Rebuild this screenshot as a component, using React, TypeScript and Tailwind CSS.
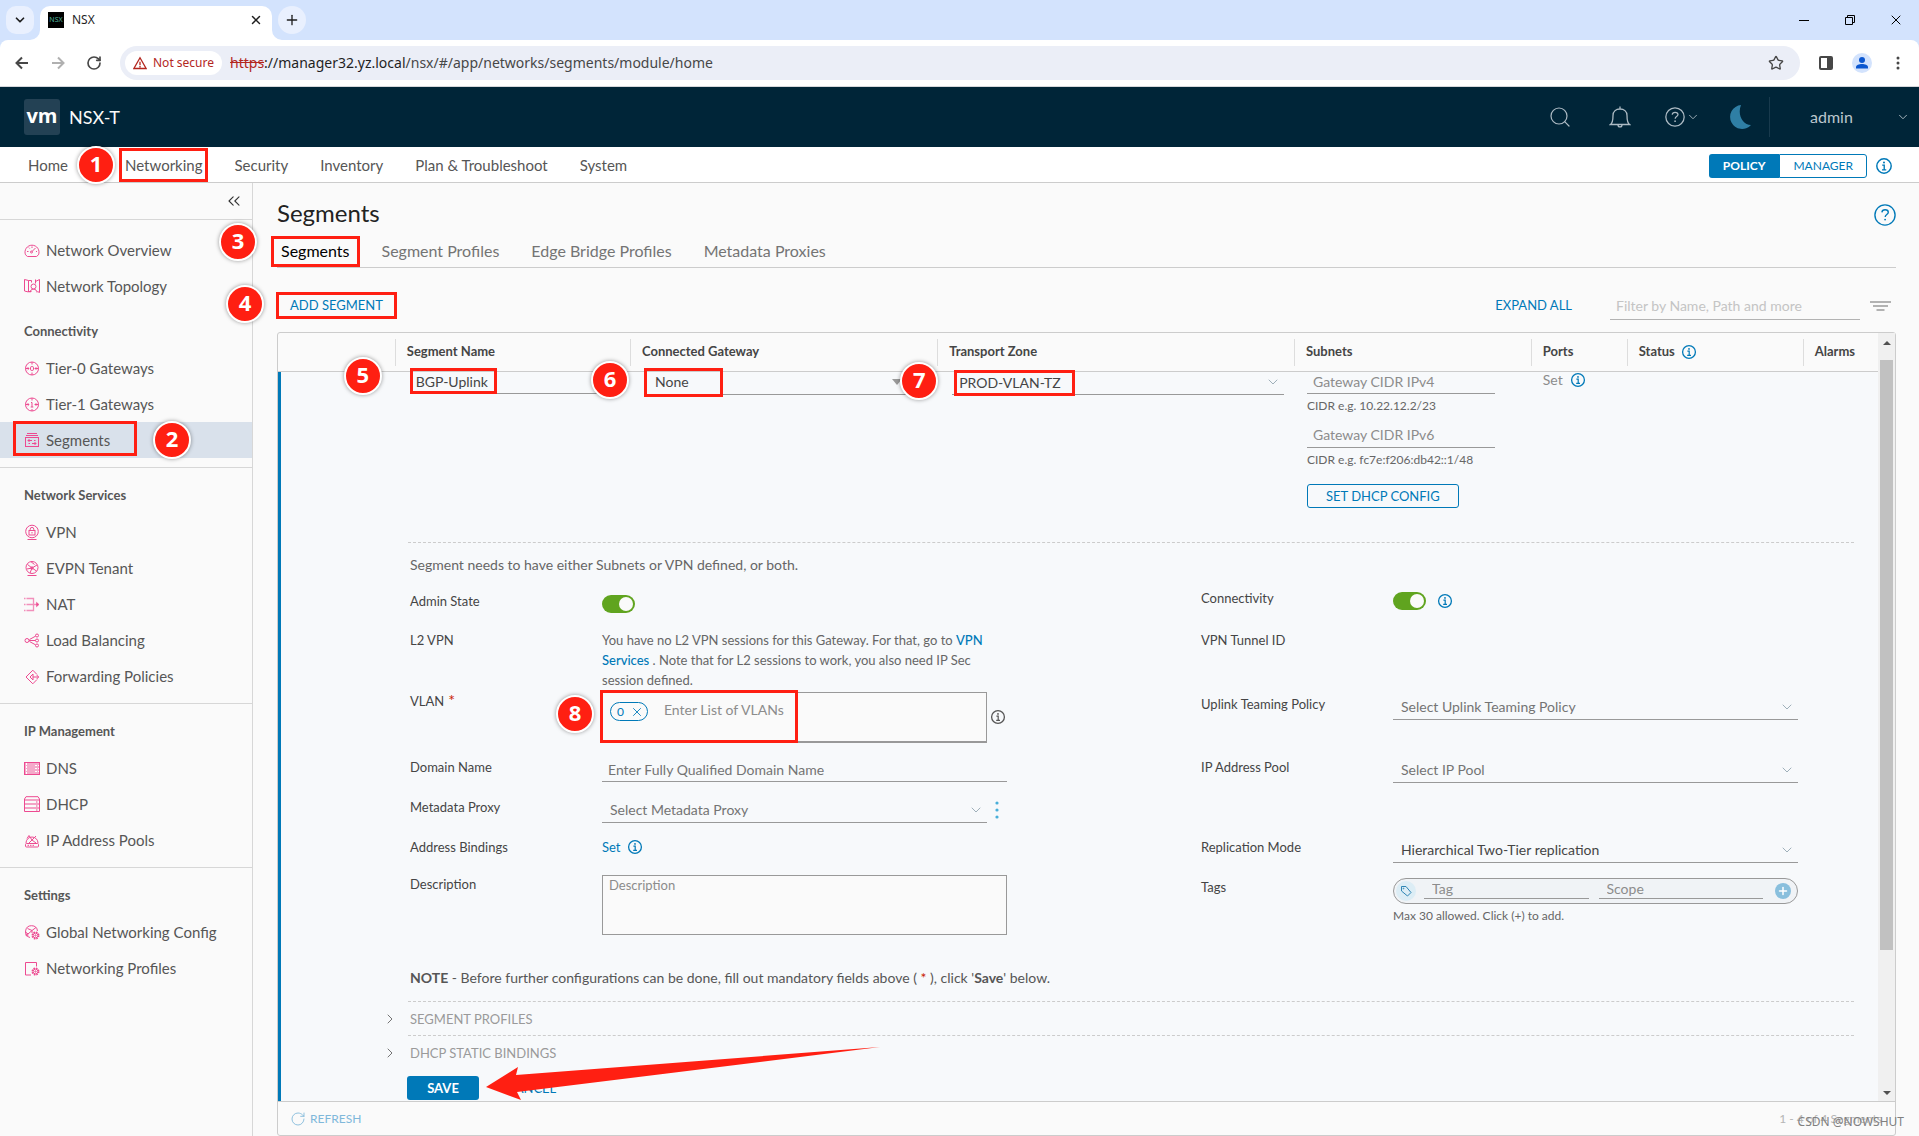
import type { ReactNode } from "react"
import { ChevronDown, ChevronRight, ChevronsLeft, Plus, RotateCw, Search, Star, X } from "lucide-react"

type SideItem = { label: string; icon: ReactNode; active?: boolean }

/* ---------- icons ---------- */

function InfoIcon({ className = "text-[#0079b8]" }: { className?: string }) {
  return (
    <svg viewBox="0 0 16 16" className={`size-4 shrink-0 ${className}`} fill="none" stroke="currentColor">
      <circle cx="8" cy="8" r="6.4" strokeWidth="1.3" />
      <path d="M6.4 7.2H8.2V11.4M6.2 11.4H10" strokeWidth="1.2" />
      <circle cx="8" cy="4.9" r="0.9" fill="currentColor" stroke="none" />
    </svg>
  )
}

function HelpIcon({ className }: { className: string }) {
  return (
    <svg viewBox="0 0 24 24" className={className} fill="none" stroke="currentColor" strokeWidth="1.5">
      <circle cx="12" cy="12" r="11" />
      <path d="M8.6 9.2c.2-1.8 1.5-2.9 3.5-2.9s3.5 1.1 3.5 2.8c0 2.4-3.4 2.4-3.4 5" />
      <circle cx="12.1" cy="17" r="1" fill="currentColor" stroke="none" />
    </svg>
  )
}

function SideIcon({ children }: { children: ReactNode }) {
  return (
    <svg viewBox="0 0 16 16" className="size-4 shrink-0 text-[#ed4a91]" fill="none" stroke="currentColor" strokeWidth="1">
      {children}
    </svg>
  )
}

const gear = (
  <>
    <circle cx="11.5" cy="11.5" r="3.3" strokeDasharray="1.6 1" strokeWidth="1.4" />
    <circle cx="11.5" cy="11.5" r="2.4" />
    <circle cx="11.5" cy="11.5" r="0.7" />
  </>
)

const overviewItems: SideItem[] = [
  {
    label: "Network Overview",
    icon: <SideIcon><path d="M3.500 14.500H12.500L14.500 12.800A7 7 0 1 0 1.500 12.800Z" /><path d="M3 9.500h1.500M4.800 5.600l.9.9M8 4.500V6M13 9.500h-1" /><path d="M11.500 6 8 9.500" /><circle cx="7.5" cy="10" r="1" /></SideIcon>,
  },
  {
    label: "Network Topology",
    icon: <SideIcon><path d="M.5 1.500V13l4 1V2.500zM4.500 2.500h3v2M4.500 13.500h3M11.500 3.500l4-2V14.500l-2-1M11.500 1.500v4" /><circle cx="9.500" cy="8.500" r="2.500" /><path d="M6 14.500c0-2 1.500-3.300 3.500-3.300s3.500 1.300 3.500 3.300" /></SideIcon>,
  },
]

const sections: { title: string; items: SideItem[] }[] = [
  {
    title: "Connectivity",
    items: [
      {
        label: "Tier-0 Gateways",
        icon: <SideIcon><circle cx="8" cy="8.500" r="6.500" /><rect x="6.500" y="6.500" width="3" height="4" rx="1.300" /><path d="M8 2v2.500M8 12.500V15M1.500 8.500H5M11 8.500h3.500M3.700 7.200 5 8.500 3.700 9.800M12.300 7.200 11 8.500l1.300 1.300" /></SideIcon>,
      },
      {
        label: "Tier-1 Gateways",
        icon: <SideIcon><circle cx="8" cy="8.500" r="6.500" /><path d="M7 6.500h1v4.500M6.700 11h2.600M8 2v2.500M8 13V15M1.500 8.500H5M11 8.500h3.500M3.700 7.200 5 8.500 3.700 9.800M12.300 7.200 11 8.500l1.300 1.300" /></SideIcon>,
      },
      {
        label: "Segments",
        active: true,
        icon: <SideIcon><path d="M3 1.500h10M2 3.500h12" /><rect x="1.500" y="5.500" width="13" height="9" /><path d="M4 8.500h4M10 8.500h1.500M5.500 7 4 8.500 5.500 10M12 11.500H8M6 11.500H4.500M10.500 10l1.500 1.500-1.500 1.500" /></SideIcon>,
      },
    ],
  },
  {
    title: "Network Services",
    items: [
      {
        label: "VPN",
        icon: <SideIcon><circle cx="8" cy="7.500" r="6.300" /><rect x="5" y="6.500" width="6" height="4.500" /><path d="M6.200 6.500V5.200a1.800 1.800 0 0 1 3.600 0v1.300M8 8v1.500M3.500 15.500h9" /></SideIcon>,
      },
      {
        label: "EVPN Tenant",
        icon: <SideIcon><circle cx="8" cy="7.500" r="6" /><path d="M3.500 4.500 8 8l5-3M8 8l-2 5M3 9l5-1 4.500 3M7 1.700 10.500 4.500M3.500 15.500h9" /><circle cx="8" cy="8" r="1.200" /></SideIcon>,
      },
      {
        label: "NAT",
        icon: <SideIcon><g opacity="0.6"><path d="M2.500 2.500H9.500V14.500H2.500M0 2.500h1.500M0 14.500h1.500M0 8.500h1.500M2.500 8.500H14" strokeWidth="1.300" /></g><path d="M12.500 6.200 15 8.500l-2.500 2.300z" fill="currentColor" strokeWidth="0.500" /></SideIcon>,
      },
      {
        label: "Load Balancing",
        icon: <SideIcon><circle cx="3" cy="8.500" r="2" /><circle cx="13" cy="3.500" r="1.500" /><circle cx="13" cy="8.500" r="1.500" /><circle cx="13" cy="13.500" r="1.500" /><path d="M5 8.500h6.500M5.500 7.500 11.500 4.200M5.500 9.500l6 3.300" /></SideIcon>,
      },
      {
        label: "Forwarding Policies",
        icon: <SideIcon><path d="M13 6.500 8.800 2.200 2 9l6.800 6.800L13 11.500" /><path d="M6 9l3-3v6z M9 9h5.500M12.700 7 14.700 9l-2 2" /></SideIcon>,
      },
    ],
  },
  {
    title: "IP Management",
    items: [
      {
        label: "DNS",
        icon: <SideIcon><rect x=".5" y="2" width="15" height="13" fill="currentColor" fillOpacity="0.450" stroke="none" /><path d="M.5 2v13M15.500 2v13M0 2.500h16M0 14.500h16" /><path d="M2.500 3v11M11 5.500h4M11 8.500h4M11 11.500h4" stroke="#fff" strokeDasharray="2 1" /></SideIcon>,
      },
      {
        label: "DHCP",
        icon: <SideIcon><path d="M.5 15.500V3L2 .7h12L15.500 3V15.500zM.5 4h15M.5 8h15M.5 12h15M12 6h1.500M12 10h1.500M12 14h1.500" /></SideIcon>,
      },
      {
        label: "IP Address Pools",
        icon: <SideIcon><path d="M2 11a6 6 0 1 1 12 0M5 3.500 8 8l4-4M8 8l-3 3M8 8l4 3M3 6.500 5 3.500" /><rect x="1.500" y="11.500" width="13" height="3.500" rx="1" /><path d="M3.500 13.300h7" strokeDasharray="1.500 1" /></SideIcon>,
      },
    ],
  },
  {
    title: "Settings",
    items: [
      {
        label: "Global Networking Config",
        icon: <SideIcon><path d="M6 13.500A6 6 0 1 1 13.500 7M3.500 4.500 8 6.500l4-3M8 6.500 4 10M8 6.500V9M1.500 8 4 10" /><circle cx="3" cy="11" r="1" />{gear}</SideIcon>,
      },
      {
        label: "Networking Profiles",
        icon: <SideIcon><path d="M12.500 6.500V2.500H1.500V15H7" />{gear}</SideIcon>,
      },
    ],
  },
]

/* ---------- annotation marks ---------- */

function Badge({ n, className }: { n: number; className: string }) {
  return (
    <span
      className={`absolute z-20 flex size-[38px] items-center justify-center rounded-full border-2 border-white bg-[#ff1f12] pb-1 font-['Open_Sans',sans-serif] text-[22px] leading-none font-bold text-white shadow-[0_0_4px_rgba(0,0,0,0.4)] ${className}`}
    >
      {n}
    </span>
  )
}

function Frame({ className }: { className: string }) {
  return <span className={`pointer-events-none absolute z-10 border-3 border-[#ff1f12] ${className}`} />
}

/* ---------- browser chrome ---------- */

function BrowserBar() {
  return (
    <header className="bg-[#d3e3fd] font-['Noto_Sans',sans-serif] text-[#1f1f1f]">
      <div className="flex h-10 items-end justify-between">
        <div className="flex h-full items-center pl-[6px]">
          <button aria-label="Search tabs" className="flex size-7 items-center justify-center rounded-[10px] bg-[#e9f0fe]">
            <ChevronDown className="size-3.5" strokeWidth={3} />
          </button>
          <div className="relative ml-[6px] flex h-[34px] w-[232px] items-center self-end rounded-t-[10px] bg-white pb-[6px] pl-2 text-xs">
            <svg viewBox="0 0 10 10" className="absolute bottom-0 -left-[10px] size-[10px] fill-white"><path d="M10 0v10H0A10 10 0 0 0 10 0" /></svg>
            <svg viewBox="0 0 10 10" className="absolute -right-[10px] bottom-0 size-[10px] fill-white"><path d="M0 0v10h10A10 10 0 0 1 0 0" /></svg>
            <span className="mr-2 flex size-4 items-center justify-center bg-black text-[7px] text-[#4fb39b]">NSX</span>
            <span>NSX</span>
            <button aria-label="Close tab" className="mr-[9px] ml-auto"><X className="size-3.5" strokeWidth={2.5} /></button>
          </div>
          <button aria-label="New tab" className="ml-[6px] flex size-7 items-center justify-center rounded-full bg-[#e9f0fe]">
            <Plus className="size-4" />
          </button>
        </div>
        <div className="flex h-full">
          <button aria-label="Minimize" className="flex w-[46px] items-center justify-center"><span className="w-[10px] border-t border-black" /></button>
          <button aria-label="Restore" className="flex w-[46px] items-center justify-center">
            <svg viewBox="0 0 10 10" className="size-[10px]" fill="none" stroke="#000"><path d="M.5 2.500h7v7h-7zM2.500 2V.5h7v7H8" /></svg>
          </button>
          <button aria-label="Close" className="flex w-[46px] items-center justify-center"><X className="size-4" strokeWidth={1.5} color="#000" /></button>
        </div>
      </div>
      <div className="flex h-[47px] items-center rounded-t-lg border-b border-[#d5d7db] bg-white pr-[3px] pl-1">
        <button aria-label="Back" className="flex w-9 justify-center">
          <svg viewBox="0 0 16 16" className="size-4" fill="none" stroke="#474747" strokeWidth="2"><path d="M14 8H3M8 2.500 2.500 8 8 13.500" /></svg>
        </button>
        <button aria-label="Forward" className="flex w-9 justify-center">
          <svg viewBox="0 0 16 16" className="size-4" fill="none" stroke="#b0b0b0" strokeWidth="2"><path d="M2 8h11M8 2.500 13.500 8 8 13.500" /></svg>
        </button>
        <button aria-label="Reload" className="flex w-9 justify-center"><RotateCw className="size-4" color="#474747" strokeWidth={2.5} /></button>
        <div className="mx-2 flex h-[34px] flex-1 items-center rounded-full bg-[#ebeef7] pr-4 pl-[5px] text-sm">
          <button className="mr-2 flex h-6 items-center gap-1.5 rounded-full bg-white px-2 text-xs text-[#b3261e]">
            <svg viewBox="0 0 16 16" className="size-3.5" fill="none" stroke="currentColor" strokeWidth="1.5"><path d="M8 2 15 14.300H1zM8 6.500v4M8 11.500V13" /></svg>
            Not secure
          </button>
          <span className="text-[#b3261e] line-through">https</span>
          <span className="text-[#1f1f1f]">://manager32.yz.local</span>
          <span className="text-[#474747]">/nsx/#/app/networks/segments/module/home</span>
          <button aria-label="Bookmark" className="ml-auto"><Star className="size-4" color="#474747" /></button>
        </div>
        <button aria-label="Side panel" className="flex w-9 justify-center">
          <svg viewBox="0 0 14 14" className="size-3.5"><rect x="1" y="1" width="12" height="12" rx="1" fill="none" stroke="#474747" strokeWidth="2" /><path d="M8 1h5v12H8z" fill="#474747" /></svg>
        </button>
        <button aria-label="Profile" className="flex w-9 justify-center">
          <svg viewBox="0 0 20 20" className="size-5"><circle cx="10" cy="10" r="10" fill="#d3e3fd" /><circle cx="10" cy="7" r="3" fill="#0b57d0" /><path d="M4 15.500v-1.500c0-1.700 3-3 6-3s6 1.300 6 3v1.500z" fill="#0b57d0" /></svg>
        </button>
        <button aria-label="Menu" className="flex w-9 justify-center">
          <svg viewBox="0 0 4 16" className="h-4 w-1" fill="#474747"><circle cx="2" cy="3" r="1.5" /><circle cx="2" cy="8" r="1.5" /><circle cx="2" cy="13" r="1.5" /></svg>
        </button>
      </div>
    </header>
  )
}

/* ---------- application header ---------- */

function AppHeader() {
  return (
    <div className="flex h-[60px] items-center bg-[#002538] pl-6 text-[#adbbc4]">
      <span className="flex size-9 items-center justify-center rounded-[3px] bg-[#234154] pb-[2px] font-['Open_Sans',sans-serif] text-xl leading-none font-bold text-white">vm</span>
      <span className="ml-[9px] text-lg text-[#fafafa]">NSX-T</span>
      <div className="ml-auto flex h-10 items-stretch">
        <button aria-label="Search" className="flex w-[60px] items-center justify-center"><Search className="size-6" strokeWidth={1.2} /></button>
        <button aria-label="Notifications" className="flex w-[60px] items-center justify-center">
          <svg viewBox="0 0 22 22" className="size-[22px]" fill="none" stroke="currentColor" strokeWidth="1.3"><path d="M1.500 18.500h19c-2-1.500-2.500-3-2.500-9 0-4-3-6.500-7-6.500S4 5.500 4 9.500c0 6-.5 7.500-2.500 9zM11 .5V3M9 18.700c0 3 4 3 4 0" /></svg>
        </button>
        <button aria-label="Help" className="flex w-[60px] items-center justify-center gap-px pl-1"><HelpIcon className="size-5" /><ChevronDown className="size-3.5" strokeWidth={1.5} /></button>
        <button aria-label="Dark mode" className="flex w-[59px] items-center justify-center">
          <svg viewBox="0 0 22 24" className="h-6 w-[22px] fill-[#2f7fa5]"><path d="M12 0A12 12 0 1 0 22 20C14 20 8 10 12 0" /></svg>
        </button>
        <button className="flex w-[150px] items-center justify-between border-l border-[#183a4d] pr-[9px] pl-10 text-base text-[#bcc7ce]">
          admin <ChevronDown className="size-3.5" strokeWidth={1.5} />
        </button>
      </div>
    </div>
  )
}

function TopNav() {
  return (
    <nav className="flex h-[36px] items-center gap-8 border-b border-[#ccc] bg-white pt-[2px] pr-[26px] pl-7 text-[15px] text-[#565656]">
      <a href="#home">Home</a>
      <a href="#networking" className="relative ml-[25px]">
        Networking
        <Badge n={1} className="-top-2 -left-[48px]" />
        <Frame className="-inset-x-[6px] -top-[6px] h-[34px]" />
      </a>
      <a href="#security">Security</a>
      <a href="#inventory">Inventory</a>
      <a href="#plan">Plan &amp; Troubleshoot</a>
      <a href="#system">System</a>
      <div className="ml-auto flex items-center text-xs">
        <button className="h-6 rounded-l-[3px] bg-[#0079b8] px-[14px] font-bold text-white">POLICY</button>
        <button className="h-6 rounded-r-[3px] border border-[#0079b8] px-[13px] text-[#0079b8]">MANAGER</button>
        <InfoIcon className="ml-2 size-[18px] text-[#0079b8]" />
      </div>
    </nav>
  )
}

function SideLink({ item }: { item: SideItem }) {
  return (
    <a
      href={`#${item.label}`}
      className={`relative flex h-9 items-center gap-[6px] pl-6 text-[15px] text-[#565656] ${item.active ? "bg-[#d9e1eb]" : ""}`}
    >
      {item.icon}
      {item.label}
      {item.active && (
        <>
          <Frame className="-top-px left-[13px] h-[35px] w-[124px]" />
          <Badge n={2} className="-top-px left-[153px]" />
        </>
      )}
    </a>
  )
}

function Sidebar() {
  return (
    <aside className="w-[253px] shrink-0 border-r border-[#d7d7d7] bg-[#fafafa]">
      <div className="flex h-[37px] items-center justify-end border-b border-[#d7d7d7] pr-2">
        <button aria-label="Collapse menu"><ChevronsLeft className="size-5 text-[#333]" strokeWidth={1.3} /></button>
      </div>
      <div className="pt-3">
        {overviewItems.map((item) => (
          <SideLink key={item.label} item={item} />
        ))}
      </div>
      {sections.map((section, i) => (
        <div key={section.title} className={i > 0 ? "mt-[9px] border-t border-[#d7d7d7] pt-[10px]" : "pt-[10px]"}>
          <h3 className="flex h-9 items-center pl-6 text-[13px] font-bold text-[#565656]">{section.title}</h3>
          {section.items.map((item) => (
            <SideLink key={item.label} item={item} />
          ))}
        </div>
      ))}
    </aside>
  )
}

/* ---------- form pieces ---------- */

function Picker({ id, value, className = "text-[#747474]" }: { id: string; value: string; className?: string }) {
  return (
    <div className="relative">
      <select id={id} className={`h-[26px] w-full appearance-none border-b border-[#999] bg-transparent px-2 text-sm ${className}`}>
        <option>{value}</option>
      </select>
      <ChevronDown className="pointer-events-none absolute top-[5px] right-[3px] size-4 text-[#9fb0ba]" strokeWidth={1.5} />
    </div>
  )
}

function Toggle({ id }: { id: string }) {
  return (
    <input
      id={id}
      type="checkbox"
      role="switch"
      defaultChecked
      className="relative mt-1 block h-[18px] w-[33px] appearance-none rounded-full bg-[#999] before:absolute before:top-[2px] before:left-[2px] before:size-[14px] before:rounded-full before:bg-[#fafafa] checked:bg-[#60a41f] checked:before:left-[17px]"
    />
  )
}

function Row({ label, htmlFor, required, className, children }: { label: string; htmlFor?: string; required?: boolean; className: string; children?: ReactNode }) {
  return (
    <div className={`grid grid-cols-[192px_minmax(0,1fr)] items-start ${className}`}>
      <label htmlFor={htmlFor} className="text-[13px] leading-5 text-[#454545]">
        {label}
        {required && <span className="ml-1 text-base leading-none text-[#c92100]">*</span>}
      </label>
      <div>{children}</div>
    </div>
  )
}

function SegmentForm() {
  return (
    <div className="mt-[13px] grid grid-cols-2 gap-x-[194px] pr-14">
      <div className="pt-[3px]">
        <Row label="Admin State" htmlFor="admin-state" className="h-[39px]">
          <Toggle id="admin-state" />
        </Row>
        <Row label="L2 VPN" className="h-[61px]">
          <p className="mr-5 text-[13px] leading-5 text-[#666]">
            You have no L2 VPN sessions for this Gateway. For that, go to{" "}
            <a href="#vpn" className="font-medium text-[#0079b8]">VPN Services</a> . Note that for L2 sessions to work, you also need IP Sec session defined.
          </p>
        </Row>
        <Row label="VLAN" htmlFor="vlan" required className="h-[66px]">
          <div className="relative flex items-center">
            <div className="mt-px flex h-[51px] flex-1 items-start border border-b-2 border-[#999] bg-[#fafafa] px-[7px] pt-[9px]">
              <span className="flex h-[19px] items-center gap-[6px] rounded-full border border-[#0079b8] pr-[3px] pl-[6px] text-xs text-[#0079b8]">
                0
                <button aria-label="Remove VLAN 0"><X className="size-3.5" strokeWidth={1.5} /></button>
              </span>
              <input id="vlan" placeholder="Enter List of VLANs" className="ml-4 h-4 min-w-0 flex-1 text-sm placeholder:text-[#8c8c8c]" />
            </div>
            <InfoIcon className="ml-[3px] text-[#565656]" />
            <span className="w-px" />
            <Frame className="-top-px -left-[2px] h-[53px] w-[198px]" />
            <Badge n={8} className="top-1 -left-[46px]" />
          </div>
        </Row>
        <Row label="Domain Name" htmlFor="domain" className="h-10">
          <input id="domain" placeholder="Enter Fully Qualified Domain Name" className="h-[25px] w-full border-b border-[#999] px-[6px] text-sm placeholder:text-[#747474]" />
        </Row>
        <Row label="Metadata Proxy" htmlFor="proxy" className="h-10">
          <div className="flex items-center">
            <div className="flex-1"><Picker id="proxy" value="Select Metadata Proxy" /></div>
            <button aria-label="More actions" className="flex w-5 justify-center">
              <svg viewBox="0 0 4 20" className="h-5 w-1" fill="#49afd9"><circle cx="2" cy="3" r="1.6" /><circle cx="2" cy="10" r="1.6" /><circle cx="2" cy="17" r="1.6" /></svg>
            </button>
          </div>
        </Row>
        <Row label="Address Bindings" className="h-[37px]">
          <div className="flex items-center gap-[6px] text-[13px] leading-5 text-[#0079b8]">
            <a href="#bindings">Set</a>
            <InfoIcon />
          </div>
        </Row>
        <Row label="Description" htmlFor="description" className="h-[94px]">
          <textarea id="description" placeholder="Description" className="mt-px block h-[60px] w-full resize-none border border-[#999] bg-[#fafafa] px-[6px] text-[13px] leading-[18px] placeholder:text-[#8c8c8c]" />
        </Row>
      </div>
      <div>
        <Row label="Connectivity" htmlFor="connectivity" className="h-[42px]">
          <div className="flex gap-[11px]">
            <Toggle id="connectivity" />
            <InfoIcon className="mt-[5px] text-[#0079b8]" />
          </div>
        </Row>
        <Row label="VPN Tunnel ID" className="h-16" />
        <Row label="Uplink Teaming Policy" htmlFor="teaming" className="h-[63px]">
          <Picker id="teaming" value="Select Uplink Teaming Policy" />
        </Row>
        <Row label="IP Address Pool" htmlFor="pool" className="h-20">
          <Picker id="pool" value="Select IP Pool" />
        </Row>
        <Row label="Replication Mode" htmlFor="replication" className="h-10">
          <Picker id="replication" value="Hierarchical Two-Tier replication" className="text-[#454545]" />
        </Row>
        <Row label="Tags" htmlFor="tag" className="h-[60px]">
          <div className="mt-px flex h-[26px] items-center rounded-full border border-[#999] bg-[#f0f3f6] px-[6px]">
            <span className="-ml-[4px] flex size-5 items-center justify-center rounded-full bg-[#dcedf5]">
              <svg viewBox="0 0 12 12" className="size-3" fill="none" stroke="#2f86b5"><path d="M1.500 1.500H6L11 7.500 7.500 11 1.500 6z" /><circle cx="3.5" cy="3.5" r=".4" /></svg>
            </span>
            <input id="tag" placeholder="Tag" className="mb-[3px] ml-2 h-[19px] min-w-0 flex-1 border-b border-[#999] px-2 text-sm placeholder:text-[#8c8c8c]" />
            <input aria-label="Scope" placeholder="Scope" className="mr-3 mb-[3px] ml-[10px] h-[19px] min-w-0 flex-1 border-b border-[#999] px-2 text-sm placeholder:text-[#8c8c8c]" />
            <button aria-label="Add tag" className="flex size-4 items-center justify-center rounded-full bg-[#89bfdd] text-white"><Plus className="size-3" strokeWidth={3} /></button>
          </div>
          <p className="mt-[2px] text-xs leading-5 text-[#666]">Max 30 allowed. Click (+) to add.</p>
        </Row>
      </div>
    </div>
  )
}

const columns: { name: string; width: string; info?: boolean }[] = [
  { name: "", width: "w-[7.3%]" },
  { name: "Segment Name", width: "w-[14.7%]" },
  { name: "Connected Gateway", width: "w-[19.2%]" },
  { name: "Transport Zone", width: "w-[22.3%]" },
  { name: "Subnets", width: "w-[14.8%]" },
  { name: "Ports", width: "w-[6%]" },
  { name: "Status", width: "w-[11%]", info: true },
  { name: "Alarms", width: "w-[4.7%]" },
]

function SegmentTable() {
  return (
    <table className="w-full table-fixed border-separate border-spacing-0">
      <thead>
        <tr className="h-[39px] text-left text-[13px] font-bold text-[#454545]">
          {columns.map((col, i) => (
            <th key={i} className={`border-b border-[#ccc] p-0 ${col.width}`}>
              <div className={`flex h-[27px] items-center gap-[6px] ${i > 0 ? "border-l border-[#ddd] pl-[11px]" : ""}`}>
                {col.name}
                {col.info && <InfoIcon />}
              </div>
            </th>
          ))}
        </tr>
      </thead>
      <tbody className="bg-[#f7f9fb] text-sm text-[#454545]">
        <tr className="align-top">
          <td className="border-l-[3px] border-[#0079b8] p-0" />
          <td className="py-0 pr-3 pl-[15px]">
            <div className="relative">
              <input aria-label="Segment name" defaultValue="BGP-Uplink" className="block h-[22px] w-full border-b border-[#999] px-[6px] pb-[3px]" />
              <Frame className="-top-1 left-0 h-[26px] w-[87px]" />
              <Badge n={5} className="-top-[15px] -left-[66px]" />
            </div>
          </td>
          <td className="py-0 pr-5 pl-[14px]">
            <div className="relative">
              <select aria-label="Connected gateway" className="block h-[23px] w-full appearance-none border-b border-[#999] px-[11px] pb-[3px]">
                <option>None</option>
              </select>
              <svg viewBox="0 0 10 6" className="absolute top-[7px] right-[15px] h-[6px] w-[10px] fill-[#9a9a9a]"><path d="M0 0h10L5 6z" /></svg>
              <Frame className="-top-1 left-0 h-[29px] w-[79px]" />
              <Badge n={6} className="-top-[11px] -left-[53px]" />
            </div>
          </td>
          <td className="py-0 pr-[10px] pl-[15px]">
            <div className="relative">
              <select aria-label="Transport zone" className="block h-[23px] w-full appearance-none border-b border-[#999] px-[7px] pb-px">
                <option>PROD-VLAN-TZ</option>
              </select>
              <ChevronDown className="pointer-events-none absolute top-[2px] right-[3px] size-4 text-[#9fb0ba]" strokeWidth={1.5} />
              <Frame className="-top-[2px] left-[2px] h-[26px] w-[121px]" />
              <Badge n={7} className="-top-[10px] -left-[52px]" />
            </div>
          </td>
          <td className="pt-0 pr-0 pb-[34px] pl-[13px]">
            <input aria-label="Gateway CIDR IPv4" placeholder="Gateway CIDR IPv4" className="block h-[22px] w-[188px] border-b border-[#999] px-[6px] pb-[2px] placeholder:text-[#8c8c8c]" />
            <p className="text-xs leading-6 text-[#666]">CIDR e.g. 10.22.12.2/23</p>
            <input aria-label="Gateway CIDR IPv6" placeholder="Gateway CIDR IPv6" className="mt-[6px] block h-6 w-[188px] border-b border-[#999] px-[6px] pb-[2px] placeholder:text-[#8c8c8c]" />
            <p className="text-xs leading-6 text-[#666]">CIDR e.g. fc7e:f206:db42::1/48</p>
            <button className="mt-3 block h-6 rounded-[3px] border border-[#0079b8] px-[18px] text-[13px] leading-none text-[#0079b8]">SET DHCP CONFIG</button>
          </td>
          <td className="py-0 pr-0 pl-3">
            <div className="flex h-4 items-center gap-[7px] text-[#8c8c8c]">Set <InfoIcon /></div>
          </td>
          <td className="p-0" />
          <td className="p-0" />
        </tr>
        <tr>
          <td colSpan={8} className="border-l-[3px] border-[#0079b8] p-0">
            <div className="pr-6 pb-px pl-[127px]">
              <div className="border-t border-dashed border-[#ccc] pl-[2px]">
                <p className="pt-3 leading-5 text-[#666]">Segment needs to have either Subnets or VPN defined, or both.</p>
                <SegmentForm />
                <p className="text-sm leading-5 text-[#565656]">
                  <b>NOTE</b> - Before further configurations can be done, fill out mandatory fields above ( <span className="text-[#c92100]">*</span> ), click &apos;<b>Save</b>&apos; below.
                </p>
              </div>
              {["SEGMENT PROFILES", "DHCP STATIC BINDINGS"].map((title, i) => (
                <div key={title} className={`h-[34px] border-t border-dashed border-[#ccc] ${i === 0 ? "mt-[13px]" : ""}`}>
                  <button className="-ml-[26px] flex h-full items-center gap-3 pt-px text-[13px] text-[#9a9a9a]">
                    <ChevronRight className="size-4 text-[#747474]" strokeWidth={1.5} />
                    {title}
                  </button>
                </div>
              ))}
              <div className="relative mt-[7px] flex h-6 items-center gap-[27px] text-[13px]">
                <button className="-ml-px h-6 w-[72px] rounded-[3px] bg-[#0079b8] font-bold text-white">SAVE</button>
                <button className="text-[#0079b8]">CANCEL</button>
                <svg viewBox="0 0 394 54" className="absolute -top-[29px] left-[78px] z-10 h-[54px] w-[394px] fill-[#ff1f12]">
                  <path d="M0 40 32 20 30 28 394 0 31 45 35 53z" />
                </svg>
              </div>
            </div>
          </td>
        </tr>
      </tbody>
    </table>
  )
}

function SegmentsPage() {
  const tabs = ["Segments", "Segment Profiles", "Edge Bridge Profiles", "Metadata Proxies"]
  return (
    <main className="min-w-0 flex-1 bg-[#fafafa] pr-[23px] pl-6">
      <div className="flex items-start justify-between pt-[14px]">
        <h1 className="text-2xl leading-8 text-[#222]">Segments</h1>
        <button aria-label="Help" className="mt-[7px]"><HelpIcon className="size-[22px] text-[#0079b8]" /></button>
      </div>
      <div className="flex h-[39px] items-center gap-8 border-b border-[#ccc] pt-[5px] pl-1 text-base text-[#747474]" role="tablist">
        {tabs.map((tab, i) => (
          <button key={tab} role="tab" aria-selected={i === 0} className={`relative ${i === 0 ? "text-black" : ""}`}>
            {tab}
            {i === 0 && (
              <>
                <Frame className="-inset-x-[10px] -top-[3px] h-[31px]" />
                <Badge n={3} className="-top-4 -left-[62px]" />
              </>
            )}
          </button>
        ))}
      </div>
      <div className="flex h-[64px] items-center pt-[11px] text-[13px] text-[#0079b8]">
        <button className="relative ml-[13px]">
          ADD SEGMENT
          <Frame className="-inset-x-[14px] -top-1 h-[27px]" />
          <Badge n={4} className="-top-[11px] -left-[64px]" />
        </button>
        <button className="mr-[38px] ml-auto">EXPAND ALL</button>
        <input aria-label="Filter segments" placeholder="Filter by Name, Path and more" className="h-7 w-[250px] border-b border-[#b3b3b3] px-[6px] text-sm placeholder:text-[#c4c4c4]" />
        <button aria-label="Filter" className="mr-[5px] ml-[10px]">
          <svg viewBox="0 0 21 10" className="h-[10px] w-[21px]" stroke="#9a9a9a" strokeWidth="1.5"><path d="M0 1h21M3 5h15M6.500 9h8" /></svg>
        </button>
      </div>
      <div className="rounded-[3px] border border-[#ccc]">
        <div className="flex">
          <div className="min-w-0 flex-1"><SegmentTable /></div>
          <div className="flex w-[17px] flex-col items-center bg-[#f0f0f0] py-[6px]">
            <svg viewBox="0 0 8 4" className="mt-[2px] h-1 w-2 fill-[#505050]"><path d="M0 4h8L4 0z" /></svg>
            <div className="mt-[15px] h-[590px] w-[13px] bg-[#c1c1c1]" />
            <svg viewBox="0 0 8 4" className="mt-auto h-1 w-2 fill-[#505050]"><path d="M0 0h8L4 4z" /></svg>
          </div>
        </div>
        <footer className="flex h-[34px] items-center justify-between border-t border-[#ccc] pr-[13px] pl-3 text-xs">
          <button className="flex items-center gap-1 text-[#7fb8da]"><RotateCw className="size-4" strokeWidth={1.3} /> REFRESH</button>
          <span className="text-[#b5b5b5]">1 - 4 of 4 Segments</span>
        </footer>
      </div>
    </main>
  )
}

export default function App() {
  return (
    <div className="relative flex min-h-screen flex-col overflow-hidden bg-[#fafafa] font-['Lato',sans-serif]">
      <BrowserBar />
      <AppHeader />
      <TopNav />
      <div className="flex flex-1">
        <Sidebar />
        <SegmentsPage />
      </div>
      <span className="absolute right-[15px] bottom-[6px] z-20 font-['Noto_Sans',sans-serif] text-xs text-[#808080]">CSDN @NOWSHUT</span>
    </div>
  )
}
